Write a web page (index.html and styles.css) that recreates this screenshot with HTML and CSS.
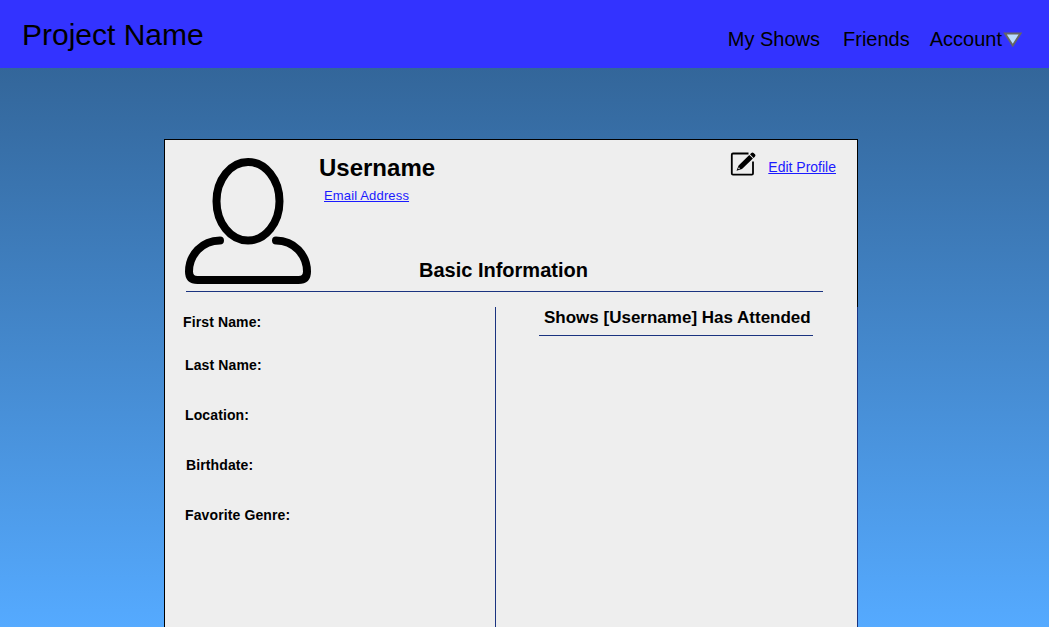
FILE: index.html
```
<!DOCTYPE html>
<html lang="en">
<head>
<meta charset="utf-8">
<title>Project Name</title>
<link rel="stylesheet" href="styles.css">
</head>
<body>
<header class="topbar">
  <div class="brand">Project Name</div>
  <nav class="nav">
    <span class="nav-shows">My Shows</span>
    <span class="nav-friends">Friends</span>
    <span class="nav-account">Account</span>
    <svg class="caret" width="20" height="18" viewBox="0 0 20 18"><path d="M3 2.500H18.500L10.750 14.500Z" fill="#bbddff" stroke="#666" stroke-width="2"/></svg>
  </nav>
</header>
<main class="card">
  <section class="profile">
    <svg class="avatar" width="126" height="126" viewBox="0 0 126 126" fill="none" stroke="#000" stroke-width="8" stroke-linecap="round">
      <ellipse cx="63" cy="43.3" rx="31.5" ry="39.3"/>
      <path d="M35 82.5C17 82.5 4 97 4 113.5Q4 122 12.500 122H113.500Q122 122 122 113.500C122 97 109 82.500 91 82.500"/>
    </svg>
    <div class="identity">
      <h1 class="username">Username</h1>
      <a class="email" href="#">Email Address</a>
      <h2 class="basic">Basic Information</h2>
    </div>
    <div class="edit">
      <svg class="edit-icon" width="26" height="26" viewBox="0 0 26 26">
        <path d="M18.500 1.500H3Q1.800 1.500 1.800 2.700V21.500Q1.800 22.700 3 22.700H21.800Q23 22.700 23 21.500V9.500" fill="none" stroke="#000" stroke-width="1.800"/>
        <path d="M6.500 18.800L8.600 13.400L19.300 3L22.900 6.600L12 16.900ZM20 2.300L21.400 1Q22.500 0 23.600 1L25 2.300Q26 3.400 25 4.500L23.600 5.900Z" fill="#000"/>
        <path d="M7.900 17.300L8.900 15.200L10.100 16.400Z" fill="#eee"/>
      </svg>
      <a class="edit-link" href="#">Edit Profile</a>
    </div>
  </section>
  <div class="columns">
    <section class="details">
      <div class="field first">First Name:</div>
      <div class="field last">Last Name:</div>
      <div class="field">Location:</div>
      <div class="field birth">Birthdate:</div>
      <div class="field">Favorite Genre:</div>
    </section>
    <section class="shows">
      <h3 class="shows-title">Shows [Username] Has Attended</h3>
    </section>
  </div>
</main>
</body>
</html>
```
FILE: styles.css
```
* { box-sizing: border-box; }
html, body { height: 100%; }
body {
  margin: 0;
  overflow: hidden;
  display: flex;
  flex-direction: column;
  font-family: "Liberation Sans", Arial, sans-serif;
  color: #000;
  background: linear-gradient(#33669a 68px, #55aaff 627px);
}
h1, h2, h3 { margin: 0; }
a { color: #1a1aff; }
.topbar {
  flex: none;
  height: 68px;
  display: flex;
  justify-content: space-between;
  background: #3333ff;
  padding: 0 27px 0 22px;
}
.brand { font-size: 30px; line-height: 34px; padding-top: 18px; }
.nav {
  display: flex;
  font-size: 20px;
  line-height: 24px;
  padding-top: 27px;
}
.nav-friends { margin-left: 23px; }
.nav-account { margin-left: 20px; }
.caret { margin-top: 4px; }
.card {
  flex: 1;
  width: 694px;
  margin: 71px 0 0 164px;
  background: #eeeeee;
  border: 1px solid #000;
  border-width: 1px 0 0 1px;
  display: flex;
  flex-direction: column;
}
.profile {
  height: 167px;
  flex: none;
  display: flex;
  padding: 18px 21px 0 20px;
  border-right: 1px solid #000;
  background: linear-gradient(#1a3380, #1a3380) 20.5px 151px / 637px 1px no-repeat;
}
.avatar { flex: none; }
.identity { margin-left: 8px; width: 340px; flex: none; }
.username { font-size: 24px; line-height: 28px; margin-top: -4px; }
.email {
  display: block;
  width: max-content;
  font-size: 13px;
  letter-spacing: .15px;
  line-height: 16px;
  margin: 6px 0 0 5px;
}
.basic { font-size: 20px; line-height: 24px; margin: 54px 0 0 100px; }
.edit { display: flex; margin-left: auto; }
.edit-icon { margin-top: -6px; flex: none; }
.edit-link { font-size: 14px; line-height: 18px; margin-left: 12px; white-space: nowrap; }
.columns {
  flex: 1;
  display: flex;
  border-right: 1px solid #1a3380;
}
.details {
  width: 331px;
  border-right: 1px solid #1a3380;
  padding: 6px 0 0 20px;
}
.field {
  font-size: 14px;
  font-weight: bold;
  letter-spacing: .12px;
  line-height: 18px;
  margin-bottom: 32px;
}
.first { margin-left: -2px; margin-bottom: 25px; }
.birth { margin-left: 1px; }
.shows { padding-left: 43px; }
.shows-title {
  width: 274px;
  height: 29px;
  border-bottom: 1px solid #1a3380;
  padding-left: 5px;
  font-size: 17px;
  line-height: 21px;
  white-space: nowrap;
}
```
